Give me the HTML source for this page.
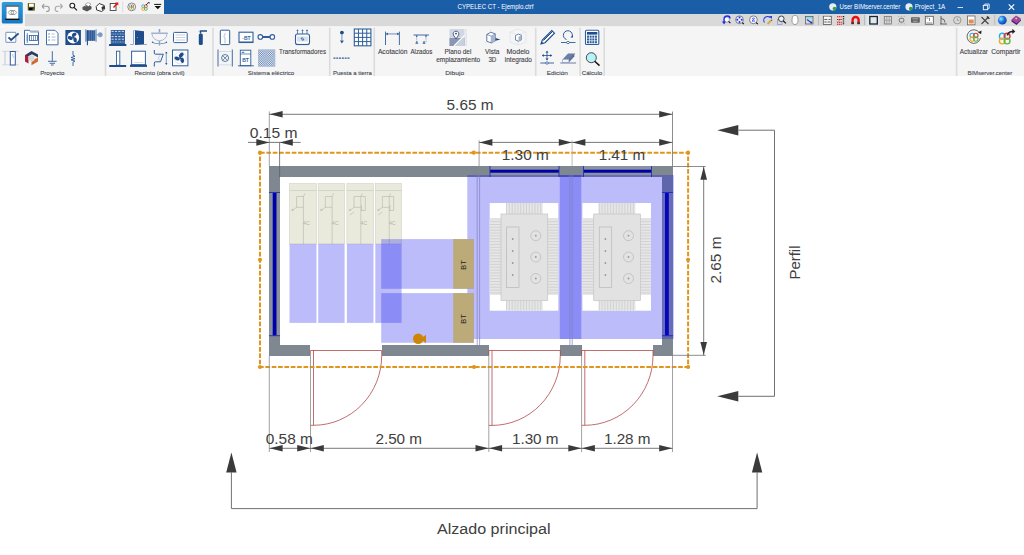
<!DOCTYPE html>
<html><head><meta charset="utf-8"><style>
html,body{margin:0;padding:0;width:1024px;height:555px;overflow:hidden;background:#fff;}
svg{display:block;}
</style></head><body>
<svg width="1024" height="555" viewBox="0 0 1024 555">
<rect width="1024" height="555" fill="#fff"/>
<rect x="0" y="0" width="1024" height="26" fill="#f3f3f3"/>
<rect x="164" y="0" width="860" height="14" fill="#1a5ea8"/>
<rect x="25" y="14" width="999" height="12" fill="#d9d9d9"/>
<rect x="25" y="26" width="999" height="0.7" fill="#e8e8e8"/>
<rect x="0" y="26.5" width="1024" height="49.6" fill="#f5f5f5"/>
<defs><linearGradient id="ab" x1="0" y1="0" x2="0" y2="1"><stop offset="0" stop-color="#2a9ee0"/><stop offset="1" stop-color="#1577c4"/></linearGradient></defs>
<rect x="1.8" y="2" width="21" height="21.4" rx="1.5" fill="url(#ab)"/>
<rect x="6.3" y="6.3" width="12" height="13" fill="#fff" stroke="#888" stroke-width="0.4"/>
<rect x="5.2" y="5.3" width="14.2" height="1.4" fill="#666"/>
<rect x="5.2" y="18.6" width="14.2" height="1.4" fill="#111"/>
<path d="M8.2 12.5 l1.6 -2 h5.2 l1.6 2 l-1.6 2 h-5.2 z" fill="none" stroke="#666" stroke-width="0.6"/><circle cx="12.4" cy="12.5" r="1.4" fill="none" stroke="#555" stroke-width="0.6"/>
<rect x="104.7" y="27.6" width="1.6" height="48.3" fill="#dbdbdb"/>
<rect x="212.2" y="27.6" width="1.6" height="48.3" fill="#dbdbdb"/>
<rect x="328.9" y="27.6" width="1.6" height="48.3" fill="#dbdbdb"/>
<rect x="373.5" y="27.6" width="1.6" height="48.3" fill="#dbdbdb"/>
<rect x="534.9000000000001" y="27.6" width="1.6" height="48.3" fill="#dbdbdb"/>
<rect x="579.3000000000001" y="27.6" width="1.6" height="48.3" fill="#dbdbdb"/>
<rect x="603.4000000000001" y="27.6" width="1.6" height="48.3" fill="#dbdbdb"/>
<rect x="955.8000000000001" y="27.6" width="1.6" height="48.3" fill="#dbdbdb"/>
<text x="457.5" y="9.4" font-size="7.2" fill="#fff" textLength="76" lengthAdjust="spacingAndGlyphs" font-family='"Liberation Sans", sans-serif'>CYPELEC CT - Ejemplo.ctrf</text>
<text x="839.5" y="9.4" font-size="7.2" fill="#fff" textLength="60.8" lengthAdjust="spacingAndGlyphs" font-family='"Liberation Sans", sans-serif'>User BIMserver.center</text>
<text x="914.7" y="9.4" font-size="7.2" fill="#fff" textLength="30.6" lengthAdjust="spacingAndGlyphs" font-family='"Liberation Sans", sans-serif'>Project_1A</text>
<circle cx="832.8" cy="6.8" r="3.6" fill="#e8eef4"/><circle cx="834.5999999999999" cy="8.6" r="1.9" fill="#3aa040"/>
<circle cx="909" cy="6.8" r="3.6" fill="#e8eef4"/><circle cx="910.8" cy="8.6" r="1.9" fill="#3aa040"/>
<rect x="957.5" y="7" width="5.5" height="0.8" fill="#fff"/>
<rect x="983.3" y="5.3" width="4.4" height="4.4" fill="none" stroke="#fff" stroke-width="0.9"/><path d="M984.8 5.3 v-1.3 h4.4 v4.4 h-1.5" stroke="#fff" stroke-width="0.8" fill="none"/>
<path d="M1008.7 4.3 L1014.2 9.8 M1014.2 4.3 L1008.7 9.8" stroke="#fff" stroke-width="1.1"/>
<text x="40.2" y="75.3" font-size="6.2" fill="#424652" stroke="#424652" stroke-width="0.1" textLength="24.1" lengthAdjust="spacingAndGlyphs" font-family='"Liberation Sans", sans-serif'>Proyecto</text>
<text x="134.5" y="75.3" font-size="6.2" fill="#424652" stroke="#424652" stroke-width="0.1" textLength="50.1" lengthAdjust="spacingAndGlyphs" font-family='"Liberation Sans", sans-serif'>Recinto (obra civil)</text>
<text x="247.7" y="75.3" font-size="6.2" fill="#424652" stroke="#424652" stroke-width="0.1" textLength="46.6" lengthAdjust="spacingAndGlyphs" font-family='"Liberation Sans", sans-serif'>Sistema eléctrico</text>
<text x="332.9" y="75.3" font-size="6.2" fill="#424652" stroke="#424652" stroke-width="0.1" textLength="39.000000000000036" lengthAdjust="spacingAndGlyphs" font-family='"Liberation Sans", sans-serif'>Puesta a tierra</text>
<text x="445.3" y="75.3" font-size="6.2" fill="#424652" stroke="#424652" stroke-width="0.1" textLength="18.899999999999956" lengthAdjust="spacingAndGlyphs" font-family='"Liberation Sans", sans-serif'>Dibujo</text>
<text x="546.7" y="75.3" font-size="6.2" fill="#424652" stroke="#424652" stroke-width="0.1" textLength="21.1" lengthAdjust="spacingAndGlyphs" font-family='"Liberation Sans", sans-serif'>Edición</text>
<text x="581.7" y="75.3" font-size="6.2" fill="#424652" stroke="#424652" stroke-width="0.1" textLength="20.6" lengthAdjust="spacingAndGlyphs" font-family='"Liberation Sans", sans-serif'>Cálculo</text>
<text x="967.4000000000001" y="75.3" font-size="6.2" fill="#424652" stroke="#424652" stroke-width="0.1" textLength="44.899999999999956" lengthAdjust="spacingAndGlyphs" font-family='"Liberation Sans", sans-serif'>BIMserver.center</text>
<text x="279.09999999999997" y="54.2" font-size="7" fill="#3c3c44" stroke="#3c3c44" stroke-width="0.1" textLength="47.000000000000036" lengthAdjust="spacingAndGlyphs" font-family='"Liberation Sans", sans-serif'>Transformadores</text>
<text x="377.9" y="54.2" font-size="7" fill="#3c3c44" stroke="#3c3c44" stroke-width="0.1" textLength="29.500000000000036" lengthAdjust="spacingAndGlyphs" font-family='"Liberation Sans", sans-serif'>Acotación</text>
<text x="410.4" y="54.2" font-size="7" fill="#3c3c44" stroke="#3c3c44" stroke-width="0.1" textLength="22.000000000000036" lengthAdjust="spacingAndGlyphs" font-family='"Liberation Sans", sans-serif'>Alzados</text>
<text x="444.5" y="54.3" font-size="7" fill="#3c3c44" stroke="#3c3c44" stroke-width="0.1" textLength="26.900000000000013" lengthAdjust="spacingAndGlyphs" font-family='"Liberation Sans", sans-serif'>Plano del</text>
<text x="436.2" y="61.6" font-size="7" fill="#3c3c44" stroke="#3c3c44" stroke-width="0.1" textLength="43.99999999999998" lengthAdjust="spacingAndGlyphs" font-family='"Liberation Sans", sans-serif'>emplazamiento</text>
<text x="485.0" y="54.3" font-size="7" fill="#3c3c44" stroke="#3c3c44" stroke-width="0.1" textLength="14.299999999999988" lengthAdjust="spacingAndGlyphs" font-family='"Liberation Sans", sans-serif'>Vista</text>
<text x="488.4" y="61.6" font-size="7" fill="#3c3c44" stroke="#3c3c44" stroke-width="0.1" textLength="7.900000000000011" lengthAdjust="spacingAndGlyphs" font-family='"Liberation Sans", sans-serif'>3D</text>
<text x="506.5" y="54.3" font-size="7" fill="#3c3c44" stroke="#3c3c44" stroke-width="0.1" textLength="23.000000000000036" lengthAdjust="spacingAndGlyphs" font-family='"Liberation Sans", sans-serif'>Modelo</text>
<text x="504.8" y="61.6" font-size="7" fill="#3c3c44" stroke="#3c3c44" stroke-width="0.1" textLength="27.200000000000024" lengthAdjust="spacingAndGlyphs" font-family='"Liberation Sans", sans-serif'>integrado</text>
<text x="959.7" y="53.7" font-size="7" fill="#3c3c44" stroke="#3c3c44" stroke-width="0.1" textLength="28.300000000000047" lengthAdjust="spacingAndGlyphs" font-family='"Liberation Sans", sans-serif'>Actualizar</text>
<text x="991.3000000000001" y="53.7" font-size="7" fill="#3c3c44" stroke="#3c3c44" stroke-width="0.1" textLength="29.299999999999933" lengthAdjust="spacingAndGlyphs" font-family='"Liberation Sans", sans-serif'>Compartir</text>
<rect x="27.8" y="3.1" width="7.1" height="7.5" rx="0.6" fill="#5a5a10"/>
<rect x="29" y="3.6" width="4.8" height="3.2" fill="#fff"/>
<rect x="29" y="7.8" width="4.8" height="2.4" fill="#000"/>
<rect x="32.6" y="8.6" width="1.2" height="1" fill="#ccc"/>
<path d="M42 6.3 l2.2 -2.4 M42 6.3 l2.2 2.2 M42.4 6.3 h4.3 a2.6 2.6 0 0 1 0 5.2 h-0.5" stroke="#999" stroke-width="1.1" fill="none"/>
<path d="M62.5 6.3 l-2.2 -2.4 M62.5 6.3 l-2.2 2.2 M62.1 6.3 h-4.3 a2.6 2.6 0 0 0 0 5.2 h0.5" stroke="#aaa" stroke-width="1.1" fill="none"/>
<circle cx="72.3" cy="5.6" r="2.4" stroke="#222" stroke-width="1.1" fill="#fff"/><path d="M74 7.4 L77 10.4" stroke="#222" stroke-width="1.3"/>
<path d="M82.5 7 l5 -2.5 l4 2 v2.5 l-4.5 2.5 l-4.5 -2 z" fill="#555"/><path d="M85 4.5 l3 -2 l3 1.5 l-2.5 2.5 z" fill="#fff" stroke="#666" stroke-width="0.5"/><circle cx="85.5" cy="6.5" r="0.6" fill="#3c3"/><circle cx="86.7" cy="6.3" r="0.6" fill="#e33"/>
<path d="M96.2 6.5 l3 -3 l5 2 l0.5 3.5 l-3 2.5 l-5 -1.5 z" fill="#fff" stroke="#333" stroke-width="1"/><path d="M101.5 7 l3 -1.3 v2.5 l-2.5 2 z" fill="#333"/>
<rect x="110.2" y="3.5" width="5.8" height="7" fill="#fff" stroke="#444" stroke-width="0.9"/><path d="M113.5 7.5 L117.3 3.6" stroke="#e11" stroke-width="1.4"/><path d="M115.3 2.6 h3 v3 z" fill="#e11"/><circle cx="119.3" cy="7.8" r="0.3" fill="#888"/>
<rect x="122.2" y="1.5" width="1" height="11" fill="#ddd"/>
<circle cx="131.7" cy="6.9" r="3.9" fill="#fff" stroke="#666" stroke-width="0.8"/><circle cx="130.5" cy="6.1" r="1.25" fill="none" stroke="#2ab0e8" stroke-width="0.8"/><circle cx="132.5" cy="6.1" r="1.25" fill="none" stroke="#e0373c" stroke-width="0.8"/><circle cx="130.5" cy="8.1" r="1.25" fill="none" stroke="#f3a81d" stroke-width="0.8"/><circle cx="132.5" cy="8.1" r="1.25" fill="none" stroke="#5cb84a" stroke-width="0.8"/>
<circle cx="143.2" cy="6.3" r="1.5" fill="none" stroke="#2ab0e8" stroke-width="0.9"/><circle cx="145.8" cy="6.3" r="1.5" fill="none" stroke="#e0373c" stroke-width="0.9"/><circle cx="143.2" cy="8.9" r="1.5" fill="none" stroke="#f3a81d" stroke-width="0.9"/><circle cx="145.8" cy="8.9" r="1.5" fill="none" stroke="#5cb84a" stroke-width="0.9"/>
<path d="M146 5 l2.5 -2.3" stroke="#333" stroke-width="1"/><path d="M147.5 2 h2 v2 z" fill="#333"/>
<rect x="154.2" y="3.9" width="7" height="1" fill="#111"/><path d="M154.6 6 h6.4 l-3.2 3.3 z" fill="#111"/>
<circle cx="726.8" cy="19.6" r="2.6" fill="#fff" stroke="#777" stroke-width="0.6"/><path d="M728.6 21.4 l1.8 1.8" stroke="#111" stroke-width="1.1"/><path d="M724 23 v-3.5 q0 -3.5 3.5 -3.5 q2.5 0 2.5 2.5" stroke="#1a2cf0" stroke-width="1.3" fill="none"/><path d="M722 21.5 h4 l-2 3 z" fill="#1a2cf0"/>
<circle cx="739.5" cy="19.8" r="3.9" fill="#f4f4ff" stroke="#555" stroke-width="0.7"/><circle cx="739.5" cy="17.6" r="1" fill="#1a2cf0"/><circle cx="739.5" cy="22" r="1" fill="#1a2cf0"/><circle cx="737.3" cy="19.8" r="1" fill="#1a2cf0"/><circle cx="741.7" cy="19.8" r="1" fill="#1a2cf0"/><path d="M742.3 22.6 l1.6 1.6" stroke="#111" stroke-width="1.1"/>
<circle cx="753.4" cy="19.8" r="3.9" fill="#f4f4ff" stroke="#555" stroke-width="0.7"/><path d="M752 19 q1.5 -1.5 2.5 -0.5 q-1 1.5 -2.5 2.5 h3" stroke="#3050f0" stroke-width="0.9" fill="none"/><path d="M756.2 22.6 l1.6 1.6" stroke="#111" stroke-width="1.1"/>
<path d="M764.5 22.5 a3.7 3.7 0 1 1 6 -4.5" stroke="#2040e8" stroke-width="1.1" fill="none"/><path d="M769 16 h3 v3 z" fill="#2040e8"/><path d="M767.5 24 l3.5 -3.5" stroke="#c8b040" stroke-width="1.8"/><circle cx="771.6" cy="20.2" r="0.8" fill="#d33"/>
<rect x="777.5" y="19.5" width="4.5" height="5" fill="none" stroke="#8090e0" stroke-width="0.7"/><circle cx="781.3" cy="18.8" r="2.8" stroke="#333" stroke-width="0.9" fill="#e8f0ff"/><path d="M783.3 20.8 l2.6 2.6" stroke="#111" stroke-width="1.2"/>
<path d="M792 21 c0 -5 1 -5.5 3 -5.5 s3 0.5 3 5.5 c0 2.5 -1.5 3.5 -3 3.5 s-3 -1 -3 -3.5 z" fill="#fff" stroke="#888" stroke-width="0.8"/>
<rect x="805.5" y="16.5" width="7.5" height="2" fill="#80e0e8"/><rect x="805.5" y="16.5" width="7.5" height="7.5" fill="none" stroke="#555" stroke-width="0.7"/><path d="M807 19.5 l4 3" stroke="#2040d0" stroke-width="1.2"/><circle cx="811.3" cy="22.6" r="1.1" fill="#2040d0"/>
<rect x="818" y="15" width="0.9" height="10" fill="#b8b8b8"/>
<rect x="823.3" y="16.3" width="8" height="8.3" fill="#f4f4f4" stroke="#555" stroke-width="0.8"/><path d="M824 17.2 h5.5" stroke="#fff" stroke-width="1"/><path d="M824.3 19.5 h3 M828.5 19.5 h2 M824.3 22 h2.5 M827.5 22 h3" stroke="#555" stroke-width="0.9"/>
<rect x="837" y="16" width="5.8" height="8.5" fill="#f0d0d0"/><path d="M837 16.8 h5.5 M837 19.5 h5.5 M837 22.3 h5.5 M837 24.3 h5.5" stroke="#c01818" stroke-width="1.1" stroke-dasharray="1.2 0.6"/><path d="M843.5 16 v8.5" stroke="#222" stroke-width="1.4" stroke-dasharray="1 0.8"/><path d="M838 21.5 l3 -2.5" stroke="#555" stroke-width="0.5"/>
<path d="M852.6 23.5 v-3.5 a3 3 0 0 1 6 0 v3.5" stroke="#e81010" stroke-width="2.4" fill="none"/><rect x="851.3" y="22.3" width="2.6" height="1.9" fill="#333"/><rect x="857.3" y="22.3" width="2.6" height="1.9" fill="#333"/>
<rect x="864" y="15" width="0.9" height="10" fill="#b8b8b8"/>
<rect x="866.3" y="14.5" width="13.3" height="11" fill="#dce9f2"/>
<rect x="869.8" y="16.5" width="7.5" height="7.5" fill="none" stroke="#222" stroke-width="1.3"/>
<rect x="884.3" y="16.5" width="7.3" height="7.5" fill="none" stroke="#777" stroke-width="0.8"/><path d="M886.8 16.5 v7.5 M889.2 16.5 v7.5 M884.3 20.2 h7.3" stroke="#888" stroke-width="0.6"/>
<rect x="899.3" y="18.3" width="4.5" height="3.8" rx="1.2" fill="none" stroke="#666" stroke-width="0.9"/><path d="M898 16.5 h0.8 M900.9 16.5 h0.8 M903.8 16.5 h0.8 M898 23.8 h0.8 M900.9 23.8 h0.8 M903.8 23.8 h0.8" stroke="#888" stroke-width="0.7"/>
<rect x="911" y="17.2" width="8.8" height="5.5" rx="0.8" fill="#606060"/><path d="M912.3 18.8 h6 M913 21.2 h4.5" stroke="#ddd" stroke-width="0.6"/>
<rect x="925.3" y="16.3" width="8" height="8" fill="#fff" stroke="#555" stroke-width="0.8"/><path d="M926.5 23 h5.6 M926.5 18 h2 M929.5 18 v3" stroke="#555" stroke-width="0.7"/>
<path d="M940 24 h7 M941 24 v-8 M941 18.5 a4 4 0 0 1 4 4" stroke="#555" stroke-width="0.9" fill="none"/>
<circle cx="957.3" cy="20.2" r="3.7" fill="none" stroke="#888" stroke-width="0.8"/><path d="M957.3 18 v2.4 h2" stroke="#888" stroke-width="0.7" fill="none"/>
<rect x="967.5" y="16" width="7.5" height="8.8" fill="#fff" stroke="#666" stroke-width="0.8"/><rect x="968.7" y="19.5" width="5" height="4" fill="#e88a50"/>
<path d="M981.5 17 l7 7 M988.5 17 l-7 7" stroke="#444" stroke-width="1.1"/><path d="M987 16.5 l2.3 2.3" stroke="#333" stroke-width="1.6"/>
<rect x="994.2" y="15" width="0.9" height="10" fill="#b8b8b8"/>
<defs><radialGradient id="glb" cx="0.35" cy="0.35" r="0.7"><stop offset="0" stop-color="#a8e0ff"/><stop offset="0.5" stop-color="#1a7ae8"/><stop offset="1" stop-color="#0840a0"/></radialGradient></defs><circle cx="1002.3" cy="20.2" r="4.4" fill="url(#glb)"/>
<path d="M1011.5 19.5 l4.5 -4 l5 3 l-4.5 4.5 z" fill="#a040a8"/><path d="M1011.5 19.5 v2 l5 3.5 l4.5 -4.5 v-1.5 l-4.5 4 z" fill="#5a1a70"/><circle cx="1016.2" cy="18.5" r="1" fill="#e8d040"/>
<rect x="5.8" y="32.4" width="10" height="10" rx="0.8" fill="#fff" stroke="#8aa3c8" stroke-width="1.1"/>
<path d="M8.5 37.3 l2.6 2.6 l7.5 -6.5" stroke="#1f4c8a" stroke-width="1.8" fill="none"/>
<path d="M24.5 30.3 h5 l1 1.5 h8 v12.8 h-14 z" fill="#fff" stroke="#2f5e9c" stroke-width="0.9"/>
<rect x="30" y="30.5" width="8.8" height="1.8" fill="#a0b0c8"/>
<path d="M27.3 33 v10 M26.3 36 h2 M26.3 38 h2 M26.3 40 h2" stroke="#2f5e9c" stroke-width="0.7"/>
<rect x="29.5" y="35.5" width="8" height="5" fill="none" stroke="#2f5e9c" stroke-width="0.8"/><path d="M31.5 35.5 v5 M33.5 35.5 v5 M35.5 35.5 v5" stroke="#2f5e9c" stroke-width="0.6"/>
<path d="M46.5 30.3 h8.5 l3 3 v11.5 h-11.5 z" fill="#fff" stroke="#2f5e9c" stroke-width="0.9"/>
<path d="M48.3 34 h1.5 M48.3 37 h1.5 M48.3 40 h1.5" stroke="#8aa3c8" stroke-width="1.5"/><path d="M51.5 34 h3 M51.5 37 h4 M51.5 40 h4" stroke="#8aa3c8" stroke-width="0.7"/>
<rect x="65.4" y="30" width="15.5" height="15" fill="#1f4c8a"/>
<circle cx="73.15" cy="37.5" r="6" fill="#fff"/>
<ellipse cx="74.17" cy="34.71" rx="2.64" ry="1.76" transform="rotate(-40 74.17 34.71)" fill="#1f4c8a"/><ellipse cx="75.06" cy="39.78" rx="2.64" ry="1.76" transform="rotate(80 75.06 39.78)" fill="#1f4c8a"/><ellipse cx="70.23" cy="38.02" rx="2.64" ry="1.76" transform="rotate(200 70.23 38.02)" fill="#1f4c8a"/><circle cx="73.15" cy="37.5" r="0.9900000000000001" fill="#1f4c8a"/>
<rect x="85" y="29.3" width="1.4" height="12.5" fill="#8aa3c8"/><rect x="95.4" y="29.3" width="1.4" height="12.5" fill="#8aa3c8"/>
<rect x="86.4" y="30.3" width="9" height="10.5" fill="#5a7eb0"/><path d="M88.8 30.3 v10.5 M90.6 30.3 v10.5 M92.4 30.3 v10.5 M94.2 30.3 v10.5" stroke="#1f4c8a" stroke-width="0.8"/>
<path d="M87.4 30.3 v15" stroke="#1f4c8a" stroke-width="1.1"/><path d="M96.8 34.8 h1.5" stroke="#2f5e9c" stroke-width="0.8"/><circle cx="100.2" cy="34.8" r="2.2" fill="#7a98c0" stroke="#8aa3c8" stroke-width="0.6"/>
<path d="M2 51.3 h17 M2 64.8 h17" stroke="#c8d0dc" stroke-width="0.8"/><path d="M5 51.3 v13.5" stroke="#c8d0dc" stroke-width="1.2"/>
<rect x="10.3" y="51.5" width="5" height="13.5" fill="#fff" stroke="#2f5e9c" stroke-width="1"/><path d="M12.8 54 v2 l1 2" stroke="#8aa3c8" stroke-width="0.6" fill="none"/>
<path d="M31.5 51 l6.5 3.5 v3 l-6 -3.3 l-6 3.3 v-3 z" fill="#2a3c5e"/>
<path d="M25 54.5 l3.5 2 v7 l-3.5 -2 z" fill="#a8203c"/><path d="M28.5 56.5 l3 -1.7 l3 1.7 v3.5 l-3 1.7 l-3 -1.7 z" fill="#d8d8dc"/>
<path d="M38 57.5 v4 l-6.5 3.7 v-3.2 l3 -1.7 v-1 z" fill="#d0682c"/>
<path d="M52.3 51.2 v10 M48 61.3 h8.6 M49.6 63.3 h5.4 M51 65 h2.6" stroke="#2f5e9c" stroke-width="0.9"/>
<path d="M73 51 v4.3 l2 1 l-4 1.2 l4 1.2 l-4 1.2 l4 1.2 l-2 1 v3.9" stroke="#2f5e9c" stroke-width="0.9" fill="none"/>
<rect x="110.8" y="30" width="14.2" height="14" fill="#2f5e9c"/>
<path d="M111.5 31.4 h13 M111.5 36.6 h13 M111.5 39.2 h13" stroke="#fff" stroke-width="0.9" stroke-dasharray="2.2 1.2" opacity="0.9"/>
<path d="M111.5 34 h13 M111.5 42 h13" stroke="#dfe6f0" stroke-width="0.8" stroke-dasharray="1 0.7" opacity="0.8"/>
<rect x="109" y="44" width="17.4" height="2" rx="0.5" fill="#1f4c8a"/>
<path d="M130.2 44.5 h3.3 v-14 h1.3 M144 44.5 h3" stroke="#8aa3c8" stroke-width="0.9" fill="none"/>
<path d="M135 30.3 l9 1 v13.3 l-9 0.5 z" fill="#1f4c8a"/><circle cx="137.3" cy="37.5" r="0.4" fill="#fff"/>
<path d="M151.2 33.2 h16.6" stroke="#8aa3c8" stroke-width="1.2"/><path d="M152 33.7 a7.5 7 0 0 0 15 0" stroke="#8aa3c8" stroke-width="0.7" fill="none"/>
<path d="M159.5 29 v3.5 M159.5 41 v4.5" stroke="#8aa3c8" stroke-width="1.5"/><path d="M152.5 42.5 q3 1.5 6 1 M166.5 42.5 q-3 1.5 -6 1" stroke="#2f5e9c" stroke-width="0.6" fill="none"/><circle cx="152.6" cy="42.3" r="0.8" fill="#2f5e9c"/><circle cx="166.4" cy="42.3" r="0.8" fill="#2f5e9c"/>
<rect x="173.5" y="32.4" width="13.7" height="10.2" rx="1" fill="#fff" stroke="#2f5e9c" stroke-width="1"/><path d="M175.5 35 h9.7 M175.5 37.5 h9.7 M175.5 40 h9.7" stroke="#b8c4d8" stroke-width="0.8"/>
<rect x="198.8" y="33.5" width="4" height="11.5" rx="1.5" fill="#1f4c8a"/><path d="M200.5 33.5 v-2.5 h6.5" stroke="#1f4c8a" stroke-width="1.4" fill="none"/><path d="M198.5 32 l1.5 -1.5" stroke="#8aa3c8" stroke-width="0.8"/>
<rect x="116.5" y="51.2" width="3.3" height="14" fill="#fff" stroke="#2f5e9c" stroke-width="0.9"/><rect x="109.2" y="65" width="17" height="2" rx="0.5" fill="#1f4c8a"/>
<rect x="131.6" y="51.2" width="13.8" height="13.5" fill="#fff" stroke="#2f5e9c" stroke-width="1"/><rect x="130" y="64.7" width="17" height="2.2" fill="#1f4c8a"/><path d="M134.5 62.5 h8.5" stroke="#8aa3c8" stroke-width="0.7" stroke-dasharray="1 1"/>
<path d="M154.3 50 V53 Q154.3 54.2 155.5 54.2 H163.3 L160.5 61.8 H155.5 Q154.3 61.8 154.3 63 V66.5" stroke="#2f5e9c" stroke-width="1" fill="none"/><path d="M160.5 54.8 L158 58 L160.5 61.2" stroke="#8aa3c8" stroke-width="0.5" fill="none"/><path d="M166.3 52 v12.5" stroke="#2f5e9c" stroke-width="0.6"/><path d="M165 53.3 l1.3 -1.6 l1.3 1.6 z M165 63.2 l1.3 1.6 l1.3 -1.6 z" fill="#1f4c8a"/>
<rect x="172.5" y="50" width="15.4" height="15.8" fill="#fff" stroke="#2f5e9c" stroke-width="1"/><circle cx="180.2" cy="57.9" r="6" fill="none" stroke="#c8d0e0" stroke-width="0.6"/>
<ellipse cx="181.26" cy="54.98" rx="2.76" ry="1.84" transform="rotate(-40 181.26 54.98)" fill="#1f4c8a"/><ellipse cx="182.20" cy="60.28" rx="2.76" ry="1.84" transform="rotate(80 182.20 60.28)" fill="#1f4c8a"/><ellipse cx="177.14" cy="58.44" rx="2.76" ry="1.84" transform="rotate(200 177.14 58.44)" fill="#1f4c8a"/><circle cx="180.2" cy="57.9" r="1.035" fill="#1f4c8a"/>
<rect x="220.3" y="30.2" width="9.4" height="14.4" rx="0.8" fill="#fff" stroke="#2f5e9c" stroke-width="1"/><path d="M225 33 v1.5 l-1.3 2 l1.3 1 v6" stroke="#8aa3c8" stroke-width="0.7" fill="none"/>
<rect x="239" y="32.2" width="14" height="10.3" fill="#fff" stroke="#2f5e9c" stroke-width="1.1"/><rect x="239" y="41.5" width="14" height="1.2" fill="#2f5e9c"/>
<text x="246.5" y="39.8" font-size="5" font-weight="bold" fill="#2f5e9c" text-anchor="middle" font-family='"Liberation Sans", sans-serif'>·BT</text>
<path d="M260.5 37 h12" stroke="#2f5e9c" stroke-width="2"/><circle cx="260.3" cy="36.9" r="2.3" fill="#fff" stroke="#2f5e9c" stroke-width="1.1"/><circle cx="272.3" cy="36.9" r="2.3" fill="#fff" stroke="#2f5e9c" stroke-width="1.1"/>
<rect x="295.5" y="34" width="14" height="10.5" rx="2" fill="#fff" stroke="#2f5e9c" stroke-width="1.1"/><rect x="297" y="36.5" width="11" height="5" fill="#d8e0ea"/><path d="M302.5 37 l-1.5 2 h3 l-1.5 2" stroke="#1f4c8a" stroke-width="0.7" fill="none"/>
<path d="M297.5 29.5 v4.5 M302.5 29.5 v4.5 M307 29.5 v4.5 M296.5 31 l1 -1 l1 1 M301.5 31 l1 -1 l1 1 M306 31 l1 -1 l1 1" stroke="#2f5e9c" stroke-width="0.7" fill="none"/><path d="M297 44.5 h11" stroke="#2f5e9c" stroke-width="1.2"/>
<path d="M218 49.5 v17 M232.3 49.5 v17" stroke="#2f5e9c" stroke-width="0.9"/><path d="M218.5 51.5 h13.5 M218.5 64.8 h13.5" stroke="#c0ccdc" stroke-width="0.6"/><circle cx="225.1" cy="58" r="3.5" fill="none" stroke="#2f5e9c" stroke-width="0.8"/><path d="M222.8 55.7 l4.6 4.6 M227.4 55.7 l-4.6 4.6" stroke="#2f5e9c" stroke-width="0.7"/>
<rect x="240.3" y="50.2" width="10.5" height="15.5" fill="#fff" stroke="#2f5e9c" stroke-width="0.9"/><path d="M240.3 54 h10.5" stroke="#2f5e9c" stroke-width="0.7"/><rect x="241.8" y="51.8" width="2.5" height="1" fill="#2f5e9c"/><path d="M238 65.8 h15.8" stroke="#2f5e9c" stroke-width="0.9"/>
<text x="245.6" y="62.2" font-size="5" font-weight="bold" fill="#2f5e9c" text-anchor="middle" font-family='"Liberation Sans", sans-serif'>BT</text>
<defs><pattern id="chk" width="1.8" height="1.8" patternUnits="userSpaceOnUse"><rect width="1.8" height="1.8" fill="#fff"/><rect width="0.9" height="0.9" fill="#3a62a0"/><rect x="0.9" y="0.9" width="0.9" height="0.9" fill="#3a62a0"/></pattern></defs>
<rect x="258" y="49.3" width="17.3" height="17.5" fill="url(#chk)" opacity="0.85"/>
<circle cx="341.9" cy="32.6" r="1.9" fill="#1f4c8a"/><path d="M341.9 34 v6" stroke="#8aa3c8" stroke-width="1.2"/><path d="M340 40.5 h3.8 l-1.9 3.1 z" fill="#1f4c8a"/>
<rect x="354.3" y="29" width="16.6" height="16.8" fill="#fff" stroke="#2f5e9c" stroke-width="1.1"/><path d="M358.45 29 v16.8 M362.6 29 v16.8 M366.75 29 v16.8 M354.3 33.2 h16.6 M354.3 37.4 h16.6 M354.3 41.6 h16.6" stroke="#2f5e9c" stroke-width="1"/>
<path d="M333.5 58.1 h16.6" stroke="#2f5e9c" stroke-width="1.4" stroke-dasharray="2 0.8"/>
<path d="M385.5 31.6 v13.4 M399.4 31.6 v13.4" stroke="#2f5e9c" stroke-width="0.9"/><path d="M386 33.9 h13" stroke="#8aa3c8" stroke-width="1.3"/><path d="M386 33.9 l1.8 -1.3 v2.6 z M399 33.9 l-1.8 -1.3 v2.6 z" fill="#1f4c8a"/>
<path d="M413.5 35 h15.5" stroke="#2f5e9c" stroke-width="0.9"/><path d="M416.7 35.5 v5 M426 35.5 v5" stroke="#8aa3c8" stroke-width="0.6"/><path d="M415.6 35.5 h2.2 l-1.1 1.8 z M424.9 35.5 h2.2 l-1.1 1.8 z" fill="#1f4c8a"/>
<text x="415.2" y="43.6" font-size="4" font-weight="bold" fill="#2f5e9c" font-family='"Liberation Sans", sans-serif'>A</text><text x="422.5" y="43.6" font-size="4" font-weight="bold" fill="#2f5e9c" font-family='"Liberation Sans", sans-serif'>A'</text>
<rect x="449.5" y="29" width="15" height="17" fill="#d0d6e2"/><path d="M449.5 38 h15 v8 h-15 z" fill="#8a96b4"/><path d="M455 46 L464.5 36.5 V46 Z" fill="#c8d0e0"/><path d="M454 46 l10.5 -10.5" stroke="#fff" stroke-width="1.2"/><rect x="465.5" y="29" width="1.3" height="17" fill="#dde2ea"/>
<path d="M456 39 l-2.6 -4 a2.8 2.8 0 1 1 5.2 0 z" fill="#fff" stroke="#2a3f6a" stroke-width="0.8"/><circle cx="456" cy="33.6" r="0.9" fill="#2a3f6a"/>
<path d="M486.8 34.5 l4 -2.3 l4.5 1.7 v7 l-4 2 l-4.5 -1.6 z" fill="#fff" stroke="#3a5a90" stroke-width="0.8"/><path d="M486.8 34.5 l4.5 1.6 v7 M491.3 36.1 l4 -2.2" stroke="#3a5a90" stroke-width="0.6" fill="none"/><path d="M491.3 36.1 l4 -2.2 v7 l-4 2 z" fill="#a8b4cc"/><path d="M495.5 38 l5 1.5 l-5 1.3 z" fill="#1f4c8a"/>
<path d="M485 42.5 l2 -0.8 M490.7 29.5 v2" stroke="#c8d0dc" stroke-width="0.5"/>
<path d="M510 32 l8 -3 l8 3 v10 l-8 3 l-8 -3 z M510 32 l8 3 l8 -3 M518 35 v10" stroke="#d4dae4" stroke-width="0.5" fill="none"/>
<path d="M515.5 35.5 l3 -1.4 l3 1.2 v4.5 l-3 1.4 l-3 -1.2 z" fill="#fff" stroke="#3a5a90" stroke-width="0.7"/><path d="M518.5 36.8 l3 -1.5 v4.5 l-3 1.4 z" fill="#a8b4cc"/>
<path d="M541 44 l1.3 -4 l9.5 -9.5 l2.7 2.7 l-9.5 9.5 z" fill="#fff" stroke="#1f4c8a" stroke-width="1.1"/><path d="M543.5 40.5 l9 -9" stroke="#1f4c8a" stroke-width="1"/><path d="M541 44 l0.8 -2.6 l1.8 1.8 z" fill="#1f4c8a"/>
<path d="M566.5 39.5 a4.5 4.5 0 1 1 5.5 -2.5" stroke="#2f5e9c" stroke-width="1" fill="none"/><path d="M570.5 37.5 h2.5 v-2.5 z" fill="#1f4c8a"/><path d="M561 42.5 h14.5" stroke="#2f5e9c" stroke-width="0.9"/><ellipse cx="568" cy="42.5" rx="1.5" ry="1.1" fill="#fff" stroke="#2f5e9c" stroke-width="0.8"/>
<path d="M547 51.5 v8 M542.5 55.5 h9" stroke="#2f5e9c" stroke-width="0.9"/><path d="M545.5 52.6 l1.5 -1.8 l1.5 1.8 z M545.5 58.6 l1.5 1.8 l1.5 -1.8 z M543.7 54 l-1.8 1.5 l1.8 1.5 z M550.3 54 l1.8 1.5 l-1.8 1.5 z" fill="#1f4c8a"/><path d="M540.3 63 h13.7" stroke="#2f5e9c" stroke-width="0.9"/><ellipse cx="547" cy="63" rx="1.5" ry="1.1" fill="#fff" stroke="#2f5e9c" stroke-width="0.8"/>
<path d="M562.5 59.5 l5.5 -6 h7.3 l-5.5 6 z" fill="#6a7ea6"/><path d="M568.8 59.5 l5.5 -6 v3 l-5.5 6 z" fill="#5a6e96"/><path d="M562.5 59.5 h6.3 v3 h-6.3 z" fill="#f4f4f4" stroke="#8898b8" stroke-width="0.6"/><path d="M560.3 63 h15.8" stroke="#8898b8" stroke-width="1.3"/>
<rect x="585.5" y="30.3" width="13.3" height="14.2" rx="1" fill="#fff" stroke="#2f5e9c" stroke-width="1.1"/><rect x="587" y="32" width="10.3" height="2.6" fill="#1f4c8a"/>
<rect x="587.0" y="35.6" width="2" height="2.1" fill="#2f5e9c"/>
<rect x="589.65" y="35.6" width="2" height="2.1" fill="#2f5e9c"/>
<rect x="592.3" y="35.6" width="2" height="2.1" fill="#2f5e9c"/>
<rect x="594.95" y="35.6" width="2" height="2.1" fill="#2f5e9c"/>
<rect x="587.0" y="38.4" width="2" height="2.1" fill="#2f5e9c"/>
<rect x="589.65" y="38.4" width="2" height="2.1" fill="#2f5e9c"/>
<rect x="592.3" y="38.4" width="2" height="2.1" fill="#2f5e9c"/>
<rect x="594.95" y="38.4" width="2" height="2.1" fill="#2f5e9c"/>
<rect x="587.0" y="41.2" width="2" height="2.1" fill="#2f5e9c"/>
<rect x="589.65" y="41.2" width="2" height="2.1" fill="#2f5e9c"/>
<rect x="592.3" y="41.2" width="2" height="2.1" fill="#2f5e9c"/>
<rect x="594.95" y="41.2" width="2" height="2.1" fill="#2f5e9c"/>
<circle cx="591.3" cy="57.7" r="5" fill="#b8f2f8" stroke="#222" stroke-width="0.8"/><path d="M594.7 61.3 l4.8 4.3" stroke="#111" stroke-width="1.5"/>
<path d="M979.3 32.5 a6.8 6.8 0 1 0 1.2 5.5" stroke="#444" stroke-width="0.8" fill="none"/><path d="M978 32.3 l3.6 -1.8 l-0.5 3.8 z" fill="#222"/>
<circle cx="972.2" cy="35.5" r="2.2" fill="none" stroke="#2ab0e8" stroke-width="1.1"/><circle cx="975.8" cy="35.5" r="2.2" fill="none" stroke="#e0373c" stroke-width="1.1"/><circle cx="972.2" cy="39.099999999999994" r="2.2" fill="none" stroke="#f3a81d" stroke-width="1.1"/><circle cx="975.8" cy="39.099999999999994" r="2.2" fill="none" stroke="#5cb84a" stroke-width="1.1"/>
<circle cx="1002.3000000000001" cy="36.2" r="2.9" fill="none" stroke="#2ab0e8" stroke-width="1.4"/><circle cx="1007.1" cy="36.2" r="2.9" fill="none" stroke="#e0373c" stroke-width="1.4"/><circle cx="1002.3000000000001" cy="41.0" r="2.9" fill="none" stroke="#f3a81d" stroke-width="1.4"/><circle cx="1007.1" cy="41.0" r="2.9" fill="none" stroke="#5cb84a" stroke-width="1.4"/>
<path d="M1007.5 35.5 q0.5 -4 5.5 -4" stroke="#222" stroke-width="1.7" fill="none"/><path d="M1012.3 28.8 l3 2.6 l-3 2.5 z" fill="#222"/>
<rect x="269" y="166" width="404" height="11" fill="#7f8791"/>
<rect x="269" y="166" width="11" height="190" fill="#7f8791"/>
<rect x="662" y="166" width="11" height="190" fill="#7f8791"/>
<rect x="269" y="345" width="41" height="11" fill="#7f8791"/>
<rect x="382" y="345" width="107" height="11" fill="#7f8791"/>
<rect x="560" y="345" width="22" height="11" fill="#7f8791"/>
<rect x="653" y="345" width="20" height="11" fill="#7f8791"/>
<rect x="490" y="166" width="69" height="11" fill="#8a92a0"/>
<rect x="490" y="169.7" width="69" height="3" fill="#0000a8"/>
<path d="M490 166V177M559 166V177" stroke="#2030b8" stroke-width="0.9"/>
<rect x="583.5" y="166" width="68.0" height="11" fill="#8a92a0"/>
<rect x="583.5" y="169.7" width="68.0" height="3" fill="#0000a8"/>
<path d="M583.5 166V177M651.5 166V177" stroke="#2030b8" stroke-width="0.9"/>
<rect x="269" y="192.5" width="11" height="143.2" fill="#8a92a0"/>
<rect x="272.7" y="192.5" width="3.8" height="143.2" fill="#0000a8"/>
<path d="M269 192.5H280M269 335.7H280" stroke="#2030b8" stroke-width="0.9"/>
<rect x="662" y="192.5" width="11" height="143.2" fill="#8a92a0"/>
<rect x="665" y="192.5" width="3.8" height="143.2" fill="#0000a8"/>
<path d="M662 192.5H673M662 335.7H673" stroke="#2030b8" stroke-width="0.9"/>
<rect x="289.5" y="183.4" width="27.0" height="60.5" fill="#eaeadc" stroke="#d2d2c8" stroke-width="0.6"/>
<line x1="289.5" y1="190.5" x2="316.5" y2="190.5" stroke="#c4c4ba" stroke-width="0.6"/>
<path d="M303.4 244 V196.5 l1.6 -3.2 M303.4 196.5 h-6.8 v10.8 h6.8 M296.59999999999997 207.3 l-4 3 M291.4 210 h2.2 M292.5 208.9 v2.2" stroke="#b4b4ac" stroke-width="0.6" fill="none"/>
<text x="303.09999999999997" y="224.6" font-size="5.2" fill="#b4b4ac" font-family='"Liberation Sans", sans-serif'>4C</text>
<rect x="318.2" y="183.4" width="26.400000000000034" height="60.5" fill="#eaeadc" stroke="#d2d2c8" stroke-width="0.6"/>
<line x1="318.2" y1="190.5" x2="344.6" y2="190.5" stroke="#c4c4ba" stroke-width="0.6"/>
<path d="M332.09999999999997 244 V196.5 l1.6 -3.2 M332.09999999999997 196.5 h-6.8 v10.8 h6.8 M325.29999999999995 207.3 l-4 3 M320.09999999999997 210 h2.2 M321.2 208.9 v2.2" stroke="#b4b4ac" stroke-width="0.6" fill="none"/>
<text x="331.79999999999995" y="224.6" font-size="5.2" fill="#b4b4ac" font-family='"Liberation Sans", sans-serif'>4C</text>
<rect x="346.9" y="183.4" width="26.600000000000023" height="60.5" fill="#eaeadc" stroke="#d2d2c8" stroke-width="0.6"/>
<line x1="346.9" y1="190.5" x2="373.5" y2="190.5" stroke="#c4c4ba" stroke-width="0.6"/>
<path d="M360.79999999999995 244 V196.5 l1.6 -3.2 M360.79999999999995 196.5 h-6.8 v10.8 h6.8 M353.99999999999994 207.3 l-4 3 M348.79999999999995 210 h2.2 M349.9 208.9 v2.2" stroke="#b4b4ac" stroke-width="0.6" fill="none"/>
<path d="M360.79999999999995 196.5 h4.5 v14 h-4.5 M353.99999999999994 212 l-4 3 M361.59999999999997 205 v6" stroke="#b4b4ac" stroke-width="0.6" fill="none"/>
<text x="360.49999999999994" y="224.6" font-size="5.2" fill="#b4b4ac" font-family='"Liberation Sans", sans-serif'>4C</text>
<rect x="375.3" y="183.4" width="26.30000000000001" height="60.5" fill="#eaeadc" stroke="#d2d2c8" stroke-width="0.6"/>
<line x1="375.3" y1="190.5" x2="401.6" y2="190.5" stroke="#c4c4ba" stroke-width="0.6"/>
<path d="M389.2 244 V196.5 l1.6 -3.2 M389.2 196.5 h-6.8 v10.8 h6.8 M382.4 207.3 l-4 3 M377.2 210 h2.2 M378.3 208.9 v2.2" stroke="#b4b4ac" stroke-width="0.6" fill="none"/>
<path d="M389.2 196.5 h4.5 v14 h-4.5 M382.4 212 l-4 3 M390.0 205 v6" stroke="#b4b4ac" stroke-width="0.6" fill="none"/>
<text x="388.9" y="224.6" font-size="5.2" fill="#b4b4ac" font-family='"Liberation Sans", sans-serif'>4C</text>
<rect x="289.5" y="243.9" width="27.0" height="79" fill="rgba(19,19,237,0.283)"/>
<rect x="318.2" y="243.9" width="26.400000000000034" height="79" fill="rgba(19,19,237,0.283)"/>
<rect x="346.9" y="243.9" width="26.600000000000023" height="79" fill="rgba(19,19,237,0.283)"/>
<rect x="375.3" y="243.9" width="26.30000000000001" height="79" fill="rgba(19,19,237,0.283)"/>
<rect x="381.2" y="239.1" width="92.6" height="49.7" fill="rgba(19,19,237,0.283)"/>
<rect x="381.2" y="293.1" width="92.6" height="49.7" fill="rgba(19,19,237,0.283)"/>
<rect x="467.3" y="175" width="114" height="164" fill="rgba(19,19,237,0.283)"/>
<rect x="559.8" y="175" width="114" height="164" fill="rgba(19,19,237,0.283)"/>
<rect x="453.2" y="239.1" width="20.6" height="49.7" fill="#bcab79"/>
<text transform="translate(466.3,264.95) rotate(-90)" text-anchor="middle" font-size="7.5" fill="#222" font-family='"Liberation Sans", sans-serif'>BT</text>
<rect x="453.2" y="293.1" width="20.6" height="49.7" fill="#bcab79"/>
<text transform="translate(466.3,318.95000000000005) rotate(-90)" text-anchor="middle" font-size="7.5" fill="#222" font-family='"Liberation Sans", sans-serif'>BT</text>
<line x1="477.2" y1="175" x2="477.2" y2="345" stroke="#8080c8" stroke-width="0.7"/>
<line x1="479.6" y1="175" x2="479.6" y2="345" stroke="#8080c8" stroke-width="0.7"/>
<line x1="569.9" y1="175" x2="569.9" y2="345" stroke="#8080c8" stroke-width="0.7"/>
<line x1="572.2" y1="175" x2="572.2" y2="345" stroke="#8080c8" stroke-width="0.7"/>
<rect x="489.7" y="203" width="68.6" height="107.7" fill="#fff"/>
<rect x="506" y="203" width="36.7" height="11" fill="#e6e6e6"/>
<rect x="506" y="300.6" width="36.7" height="10.1" fill="#e6e6e6"/>
<rect x="489.7" y="218.8" width="11.3" height="76.2" fill="#e6e6e6"/>
<rect x="547.7" y="218.8" width="10.6" height="76.2" fill="#e6e6e6"/>
<path d="M506.5 203V214M506.5 300.6V310.7M509.35 203V214M509.35 300.6V310.7M512.2 203V214M512.2 300.6V310.7M515.05 203V214M515.05 300.6V310.7M517.9 203V214M517.9 300.6V310.7M520.75 203V214M520.75 300.6V310.7M523.6 203V214M523.6 300.6V310.7M526.45 203V214M526.45 300.6V310.7M529.3 203V214M529.3 300.6V310.7M532.15 203V214M532.15 300.6V310.7M535.0 203V214M535.0 300.6V310.7M537.85 203V214M537.85 300.6V310.7M540.7 203V214M540.7 300.6V310.7M489.7 218.8H501.0M547.7 218.8H558.3M489.7 221.65H501.0M547.7 221.65H558.3M489.7 224.5H501.0M547.7 224.5H558.3M489.7 227.35000000000002H501.0M547.7 227.35000000000002H558.3M489.7 230.20000000000002H501.0M547.7 230.20000000000002H558.3M489.7 233.05H501.0M547.7 233.05H558.3M489.7 235.9H501.0M547.7 235.9H558.3M489.7 238.75H501.0M547.7 238.75H558.3M489.7 241.60000000000002H501.0M547.7 241.60000000000002H558.3M489.7 244.45000000000002H501.0M547.7 244.45000000000002H558.3M489.7 247.3H501.0M547.7 247.3H558.3M489.7 250.15H501.0M547.7 250.15H558.3M489.7 253.0H501.0M547.7 253.0H558.3M489.7 255.85000000000002H501.0M547.7 255.85000000000002H558.3M489.7 258.7H501.0M547.7 258.7H558.3M489.7 261.55H501.0M547.7 261.55H558.3M489.7 264.40000000000003H501.0M547.7 264.40000000000003H558.3M489.7 267.25H501.0M547.7 267.25H558.3M489.7 270.1H501.0M547.7 270.1H558.3M489.7 272.95H501.0M547.7 272.95H558.3M489.7 275.8H501.0M547.7 275.8H558.3M489.7 278.65000000000003H501.0M547.7 278.65000000000003H558.3M489.7 281.5H501.0M547.7 281.5H558.3M489.7 284.35H501.0M547.7 284.35H558.3M489.7 287.20000000000005H501.0M547.7 287.20000000000005H558.3M489.7 290.05H501.0M547.7 290.05H558.3M489.7 292.90000000000003H501.0M547.7 292.90000000000003H558.3" stroke="#c4c4c4" stroke-width="0.6"/>
<rect x="501" y="214" width="46.7" height="86.6" fill="#e2e2e2" stroke="#c4c4c4" stroke-width="0.7"/>
<rect x="506.6" y="227" width="12.4" height="60.6" fill="none" stroke="#b8b8b8" stroke-width="0.7"/>
<circle cx="512.7" cy="239" r="0.9" fill="#999"/>
<circle cx="512.7" cy="251" r="0.9" fill="#999"/>
<circle cx="512.7" cy="263" r="0.9" fill="#999"/>
<circle cx="512.7" cy="275" r="0.9" fill="#999"/>
<circle cx="535.8" cy="235.7" r="5" fill="none" stroke="#b8b8b8" stroke-width="0.7"/>
<circle cx="535.8" cy="235.7" r="0.9" fill="#999"/>
<circle cx="535.8" cy="257" r="5" fill="none" stroke="#b8b8b8" stroke-width="0.7"/>
<circle cx="535.8" cy="257" r="0.9" fill="#999"/>
<circle cx="535.8" cy="278.5" r="5" fill="none" stroke="#b8b8b8" stroke-width="0.7"/>
<circle cx="535.8" cy="278.5" r="0.9" fill="#999"/>
<rect x="582.4" y="203" width="68.6" height="107.7" fill="#fff"/>
<rect x="598.7" y="203" width="36.7" height="11" fill="#e6e6e6"/>
<rect x="598.7" y="300.6" width="36.7" height="10.1" fill="#e6e6e6"/>
<rect x="582.4" y="218.8" width="11.3" height="76.2" fill="#e6e6e6"/>
<rect x="640.4" y="218.8" width="10.6" height="76.2" fill="#e6e6e6"/>
<path d="M599.2 203V214M599.2 300.6V310.7M602.0500000000001 203V214M602.0500000000001 300.6V310.7M604.9000000000001 203V214M604.9000000000001 300.6V310.7M607.75 203V214M607.75 300.6V310.7M610.6 203V214M610.6 300.6V310.7M613.45 203V214M613.45 300.6V310.7M616.3000000000001 203V214M616.3000000000001 300.6V310.7M619.1500000000001 203V214M619.1500000000001 300.6V310.7M622.0 203V214M622.0 300.6V310.7M624.85 203V214M624.85 300.6V310.7M627.7 203V214M627.7 300.6V310.7M630.5500000000001 203V214M630.5500000000001 300.6V310.7M633.4000000000001 203V214M633.4000000000001 300.6V310.7M582.4 218.8H593.6999999999999M640.4 218.8H651.0M582.4 221.65H593.6999999999999M640.4 221.65H651.0M582.4 224.5H593.6999999999999M640.4 224.5H651.0M582.4 227.35000000000002H593.6999999999999M640.4 227.35000000000002H651.0M582.4 230.20000000000002H593.6999999999999M640.4 230.20000000000002H651.0M582.4 233.05H593.6999999999999M640.4 233.05H651.0M582.4 235.9H593.6999999999999M640.4 235.9H651.0M582.4 238.75H593.6999999999999M640.4 238.75H651.0M582.4 241.60000000000002H593.6999999999999M640.4 241.60000000000002H651.0M582.4 244.45000000000002H593.6999999999999M640.4 244.45000000000002H651.0M582.4 247.3H593.6999999999999M640.4 247.3H651.0M582.4 250.15H593.6999999999999M640.4 250.15H651.0M582.4 253.0H593.6999999999999M640.4 253.0H651.0M582.4 255.85000000000002H593.6999999999999M640.4 255.85000000000002H651.0M582.4 258.7H593.6999999999999M640.4 258.7H651.0M582.4 261.55H593.6999999999999M640.4 261.55H651.0M582.4 264.40000000000003H593.6999999999999M640.4 264.40000000000003H651.0M582.4 267.25H593.6999999999999M640.4 267.25H651.0M582.4 270.1H593.6999999999999M640.4 270.1H651.0M582.4 272.95H593.6999999999999M640.4 272.95H651.0M582.4 275.8H593.6999999999999M640.4 275.8H651.0M582.4 278.65000000000003H593.6999999999999M640.4 278.65000000000003H651.0M582.4 281.5H593.6999999999999M640.4 281.5H651.0M582.4 284.35H593.6999999999999M640.4 284.35H651.0M582.4 287.20000000000005H593.6999999999999M640.4 287.20000000000005H651.0M582.4 290.05H593.6999999999999M640.4 290.05H651.0M582.4 292.90000000000003H593.6999999999999M640.4 292.90000000000003H651.0" stroke="#c4c4c4" stroke-width="0.6"/>
<rect x="593.7" y="214" width="46.7" height="86.6" fill="#e2e2e2" stroke="#c4c4c4" stroke-width="0.7"/>
<rect x="599.3000000000001" y="227" width="12.4" height="60.6" fill="none" stroke="#b8b8b8" stroke-width="0.7"/>
<circle cx="605.4000000000001" cy="239" r="0.9" fill="#999"/>
<circle cx="605.4000000000001" cy="251" r="0.9" fill="#999"/>
<circle cx="605.4000000000001" cy="263" r="0.9" fill="#999"/>
<circle cx="605.4000000000001" cy="275" r="0.9" fill="#999"/>
<circle cx="628.5" cy="235.7" r="5" fill="none" stroke="#b8b8b8" stroke-width="0.7"/>
<circle cx="628.5" cy="235.7" r="0.9" fill="#999"/>
<circle cx="628.5" cy="257" r="5" fill="none" stroke="#b8b8b8" stroke-width="0.7"/>
<circle cx="628.5" cy="257" r="0.9" fill="#999"/>
<circle cx="628.5" cy="278.5" r="5" fill="none" stroke="#b8b8b8" stroke-width="0.7"/>
<circle cx="628.5" cy="278.5" r="0.9" fill="#999"/>
<circle cx="418.2" cy="338.8" r="5.2" fill="#cf8604"/>
<path d="M420.5 338.8 L426 334.8 V343.3 Z" fill="#cf8604"/>
<path d="M310.3 350.5 H381.7 M310.3 350.5 V355.5 M313.5 350.5 V425.29999999999995 H310.3 M381.7 350.5 V355.5 A68.19999999999997 69.79999999999997 0 0 1 313.5 425.29999999999995" stroke="#b04848" stroke-width="0.8" fill="none"/>
<path d="M488.8 350.5 H560.3 M488.8 350.5 V355.5 M492.0 350.5 V425.3999999999999 H488.8 M560.3 350.5 V355.5 A68.29999999999994 69.89999999999993 0 0 1 492.0 425.3999999999999" stroke="#b04848" stroke-width="0.8" fill="none"/>
<path d="M581.6 350.5 H653 M581.6 350.5 V355.5 M584.8000000000001 350.5 V425.29999999999995 H581.6 M653 350.5 V355.5 A68.19999999999997 69.79999999999997 0 0 1 584.8000000000001 425.29999999999995" stroke="#b04848" stroke-width="0.8" fill="none"/>
<rect x="260" y="152.7" width="428.1" height="214.3" fill="none" stroke="#e0961c" stroke-width="2" stroke-dasharray="4.7 1.65"/>
<circle cx="260" cy="152.7" r="2.1" fill="#e0961c"/>
<circle cx="473.8" cy="152.7" r="2.1" fill="#e0961c"/>
<circle cx="688.1" cy="152.7" r="2.1" fill="#e0961c"/>
<circle cx="260" cy="259.8" r="2.1" fill="#e0961c"/>
<circle cx="688.1" cy="259.8" r="2.1" fill="#e0961c"/>
<circle cx="260" cy="367" r="2.1" fill="#e0961c"/>
<circle cx="474" cy="367" r="2.1" fill="#e0961c"/>
<circle cx="688.1" cy="367" r="2.1" fill="#e0961c"/>
<line x1="269.3" y1="111.4" x2="269.3" y2="166.2" stroke="#8a8a8a" stroke-width="0.8"/>
<line x1="672.5" y1="111.5" x2="672.5" y2="166.2" stroke="#707070" stroke-width="0.8"/>
<line x1="279.6" y1="142.4" x2="279.6" y2="177" stroke="#606060" stroke-width="0.8"/>
<line x1="479.1" y1="140.3" x2="479.1" y2="175" stroke="#8a8a8a" stroke-width="0.8"/>
<line x1="572.1" y1="140.3" x2="572.1" y2="166.2" stroke="#b0b0b0" stroke-width="0.8"/>
<line x1="269.3" y1="114.3" x2="672.5" y2="114.3" stroke="#555" stroke-width="0.8"/>
<polygon points="269.6,114.3 282.6,111.0 282.6,117.6" fill="#3a3a3a"/>
<polygon points="672.2,114.3 659.2,111.0 659.2,117.6" fill="#3a3a3a"/>
<line x1="248" y1="142.4" x2="300.6" y2="142.4" stroke="#555" stroke-width="0.8"/>
<polygon points="269.3,142.4 256.3,139.1 256.3,145.70000000000002" fill="#3a3a3a"/>
<polygon points="279.8,142.4 292.8,139.1 292.8,145.70000000000002" fill="#3a3a3a"/>
<line x1="479.1" y1="142.4" x2="672.5" y2="142.4" stroke="#555" stroke-width="0.8"/>
<polygon points="479.4,142.4 492.4,139.1 492.4,145.70000000000002" fill="#3a3a3a"/>
<polygon points="571.8,142.4 558.8,139.1 558.8,145.70000000000002" fill="#3a3a3a"/>
<polygon points="572.4,142.4 585.4,139.1 585.4,145.70000000000002" fill="#3a3a3a"/>
<polygon points="672.2,142.4 659.2,139.1 659.2,145.70000000000002" fill="#3a3a3a"/>
<line x1="672.8" y1="166.5" x2="705.6" y2="166.5" stroke="#707070" stroke-width="0.8"/>
<line x1="672.8" y1="355.3" x2="705.6" y2="355.3" stroke="#707070" stroke-width="0.8"/>
<line x1="703.7" y1="166.5" x2="703.7" y2="355.3" stroke="#555" stroke-width="0.8"/>
<polygon points="703.7,166.8 700.4000000000001,179.8 707.0,179.8" fill="#3a3a3a"/>
<polygon points="703.7,355 700.4000000000001,342 707.0,342" fill="#3a3a3a"/>
<line x1="269.3" y1="355.6" x2="269.3" y2="452" stroke="#8a8a8a" stroke-width="0.8"/>
<line x1="310.5" y1="355.6" x2="310.5" y2="452" stroke="#8a8a8a" stroke-width="0.8"/>
<line x1="488.8" y1="355.6" x2="488.8" y2="452" stroke="#8a8a8a" stroke-width="0.8"/>
<line x1="581.6" y1="355.6" x2="581.6" y2="452" stroke="#8a8a8a" stroke-width="0.8"/>
<line x1="672.5" y1="355.6" x2="672.5" y2="452" stroke="#8a8a8a" stroke-width="0.8"/>
<line x1="269.3" y1="448.3" x2="672.5" y2="448.3" stroke="#555" stroke-width="0.8"/>
<polygon points="269.6,448.3 282.6,445.0 282.6,451.6" fill="#3a3a3a"/>
<polygon points="310.2,448.3 297.2,445.0 297.2,451.6" fill="#3a3a3a"/>
<polygon points="310.8,448.3 323.8,445.0 323.8,451.6" fill="#3a3a3a"/>
<polygon points="488.5,448.3 475.5,445.0 475.5,451.6" fill="#3a3a3a"/>
<polygon points="489.1,448.3 502.1,445.0 502.1,451.6" fill="#3a3a3a"/>
<polygon points="581.3,448.3 568.3,445.0 568.3,451.6" fill="#3a3a3a"/>
<polygon points="581.9,448.3 594.9,445.0 594.9,451.6" fill="#3a3a3a"/>
<polygon points="672.2,448.3 659.2,445.0 659.2,451.6" fill="#3a3a3a"/>
<text x="446.59999999999997" y="109.9" font-size="14.9" fill="#404040" textLength="46.89999999999999" lengthAdjust="spacingAndGlyphs" font-family='"Liberation Sans", sans-serif'>5.65 m</text>
<text x="249.8" y="138.1" font-size="14.9" fill="#404040" textLength="47.8" lengthAdjust="spacingAndGlyphs" font-family='"Liberation Sans", sans-serif'>0.15 m</text>
<text x="501.79999999999995" y="159.8" font-size="14.9" fill="#404040" textLength="47.00000000000007" lengthAdjust="spacingAndGlyphs" font-family='"Liberation Sans", sans-serif'>1.30 m</text>
<text x="598.6999999999999" y="159.8" font-size="14.9" fill="#404040" textLength="46.40000000000005" lengthAdjust="spacingAndGlyphs" font-family='"Liberation Sans", sans-serif'>1.41 m</text>
<text x="265.7" y="443.8" font-size="14.9" fill="#404040" textLength="47.2" lengthAdjust="spacingAndGlyphs" font-family='"Liberation Sans", sans-serif'>0.58 m</text>
<text x="375.4" y="443.8" font-size="14.9" fill="#404040" textLength="46.7" lengthAdjust="spacingAndGlyphs" font-family='"Liberation Sans", sans-serif'>2.50 m</text>
<text x="511.9" y="443.8" font-size="14.9" fill="#404040" textLength="46.7" lengthAdjust="spacingAndGlyphs" font-family='"Liberation Sans", sans-serif'>1.30 m</text>
<text x="603.9" y="443.8" font-size="14.9" fill="#404040" textLength="46.7" lengthAdjust="spacingAndGlyphs" font-family='"Liberation Sans", sans-serif'>1.28 m</text>
<text transform="translate(721,283.5) rotate(-90)" font-size="14.9" fill="#404040" textLength="47" lengthAdjust="spacingAndGlyphs" font-family='"Liberation Sans", sans-serif'>2.65 m</text>
<text transform="translate(800.3,279.5) rotate(-90)" font-size="14.9" fill="#404040" textLength="34" lengthAdjust="spacingAndGlyphs" font-family='"Liberation Sans", sans-serif'>Perfil</text>
<text x="437" y="534" font-size="14.9" fill="#404040" textLength="113.5" lengthAdjust="spacingAndGlyphs" font-family='"Liberation Sans", sans-serif'>Alzado principal</text>
<path d="M231.4 472.4 V508.6 H757.1 V472.4" stroke="#707070" stroke-width="1" fill="none"/>
<polygon points="231.4,452.6 226.20000000000002,472.6 236.6,472.6" fill="#3a3a3a"/>
<polygon points="757.1,452.6 751.9,472.6 762.3000000000001,472.6" fill="#3a3a3a"/>
<path d="M738.4 130.2 H774.5 V396.3 H738.4" stroke="#707070" stroke-width="1" fill="none"/>
<polygon points="717.3,130.2 738.3,124.99999999999999 738.3,135.39999999999998" fill="#3a3a3a"/>
<polygon points="717.3,396.3 738.3,391.1 738.3,401.5" fill="#3a3a3a"/>
</svg>
</body></html>
